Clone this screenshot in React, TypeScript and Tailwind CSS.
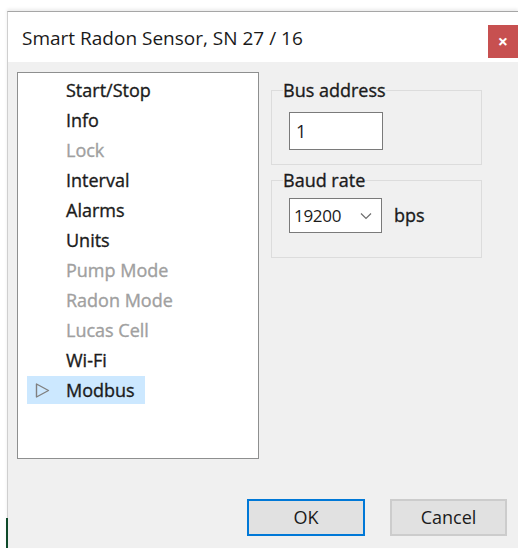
import React from 'react';

type NavItem = { label: string; enabled: boolean; selected?: boolean };

const items: NavItem[] = [
  { label: 'Start/Stop', enabled: true },
  { label: 'Info', enabled: true },
  { label: 'Lock', enabled: false },
  { label: 'Interval', enabled: true },
  { label: 'Alarms', enabled: true },
  { label: 'Units', enabled: true },
  { label: 'Pump Mode', enabled: false },
  { label: 'Radon Mode', enabled: false },
  { label: 'Lucas Cell', enabled: false },
  { label: 'Wi-Fi', enabled: true },
  { label: 'Modbus', enabled: true, selected: true },
];

const font = { fontFamily: '"Open Sans", "Noto Sans", sans-serif' };

// labels in the dialog use a slightly heavier face than the title
const heavy = '[-webkit-text-stroke:0.35px_currentColor]';

function Chevron() {
  return (
    <svg width="12" height="8" viewBox="0 0 12 8" className="text-[#6d6d6d]">
      <path d="M1 1.5 L6 6.5 L11 1.5" fill="none" stroke="currentColor" strokeWidth="1.2" />
    </svg>
  );
}

function Caret() {
  return (
    <svg width="15" height="15" viewBox="0 0 15 15">
      <path d="M1.5 1 L13.5 7.5 L1.5 14 Z" fill="none" stroke="#808080" strokeWidth="1.4" strokeLinejoin="round" />
    </svg>
  );
}

export default function App() {
  return (
    <div className="h-[555px] w-[518px] overflow-hidden bg-white pl-[7px] pt-[11px]" style={font}>
      <div className="relative flex h-[537px] flex-col border-l border-t border-l-[#cfcfcf] border-t-[#a6a6a6] shadow-[0_-2px_3px_rgba(0,0,0,0.08)]">
        {/* title bar */}
        <div className="flex h-[50px] items-start justify-between bg-white pl-[14px]">
          <span className="mt-[13px] text-[19px] leading-[26px] text-[#1a1a1a]">Smart Radon Sensor, SN 27 / 16</span>
          <div className="mt-[13px] flex h-[33px] w-[30px] items-center justify-center bg-[#c75050] text-[18px] font-bold text-white">
            ×
          </div>
        </div>

        {/* dialog body */}
        <div className="flex flex-1 flex-col bg-[#f0f0f0] pl-[9px] pr-[11px] pt-[10px]">
          <div className="flex gap-[12px]">
            {/* page tree */}
            <div className="h-[387px] w-[242px] border border-[#8e8f8f] bg-white pt-[2px]">
              {items.map((it) => (
                <div key={it.label} className="flex h-[30px] items-center pl-[9px]">
                  <span
                    className={`flex h-[28px] items-center pr-[10px] ${it.selected ? 'bg-[#cce8ff]' : ''}`}
                  >
                    <span className="flex w-[39px] items-center pl-[8px]">{it.selected && <Caret />}</span>
                    <span
                      className={`text-[18px] leading-none ${heavy} ${
                        it.enabled ? 'text-[#1b1b1b]' : 'text-[#a0a0a0]'
                      }`}
                    >
                      {it.label}
                    </span>
                  </span>
                </div>
              ))}
            </div>

            {/* modbus settings */}
            <div className="flex w-[211px] flex-col">
              <fieldset className="mt-[7px] h-[86px] border border-[#dcdcdc] px-[11px]">
                <legend className={`px-0 text-[18px] leading-[22px] text-[#1b1b1b] ${heavy}`}>Bus address</legend>
                <div className="pl-[6px] pt-[11px]">
                  <div className="flex h-[38px] w-[94px] items-center border border-[#7a7a7a] bg-white pl-[6px] text-[18px] text-[#1b1b1b]">
                    1
                  </div>
                </div>
              </fieldset>

              <fieldset className="mt-[4px] h-[89px] border border-[#dcdcdc] px-[11px]">
                <legend className={`px-0 text-[18px] leading-[22px] text-[#1b1b1b] ${heavy}`}>Baud rate</legend>
                <div className="flex items-center gap-[12px] pl-[6px] pt-[7px]">
                  <div className="flex h-[35px] w-[93px] items-center justify-between border border-[#7a7a7a] bg-white pl-[4px] pr-[9px]">
                    <span className="text-[17px] tracking-[-0.3px] text-[#1b1b1b]">19200</span>
                    <Chevron />
                  </div>
                  <span className={`text-[18px] text-[#1b1b1b] ${heavy}`}>bps</span>
                </div>
              </fieldset>
            </div>
          </div>

          {/* buttons */}
          <div className="mt-[40px] flex justify-end gap-[25px]">
            <button className="flex h-[37px] w-[118px] items-center justify-center border-2 border-[#0078d7] bg-[#e1e1e1] text-[18px] text-[#1b1b1b]">
              OK
            </button>
            <button className="flex h-[37px] w-[117px] items-center justify-center border-2 border-[#cccccc] bg-[#e1e1e1] text-[18px] text-[#1b1b1b]">
              Cancel
            </button>
          </div>
        </div>

        {/* sliver of the window behind */}
        <div className="absolute bottom-0 left-[-2px] h-[30px] w-[2px] bg-[#0f4a2a]" />
      </div>
    </div>
  );
}
